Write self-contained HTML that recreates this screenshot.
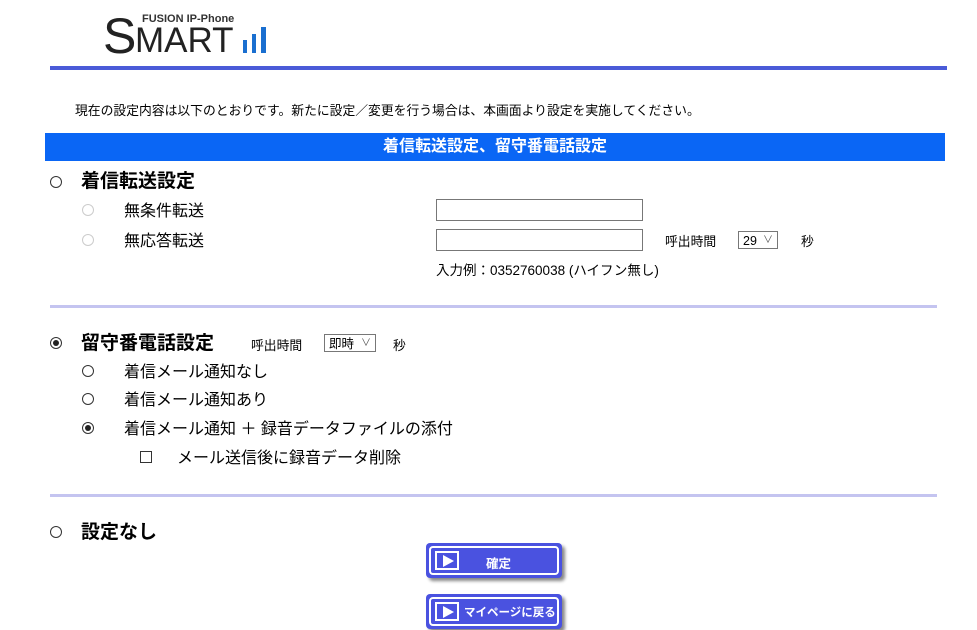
<!DOCTYPE html>
<html><head><meta charset="utf-8">
<style>
body{margin:0;width:977px;height:630px;overflow:hidden;background:#fff;font-family:"Liberation Sans","Noto Sans CJK JP",sans-serif;color:#000;position:relative}
.a{position:absolute;white-space:nowrap}
.r{position:absolute;width:10px;height:10px;border:1px solid #333;border-radius:50%;background:#fff}
.r.dis{border-color:#ccc}
.r.on::after{content:"";position:absolute;left:2px;top:2px;width:6px;height:6px;border-radius:50%;background:#222}
.in{position:absolute;border:1px solid #777;background:#fff;height:20px}
.sel{position:absolute;border:1px solid #777;height:18px;font-size:12.5px;line-height:18px;padding-left:4px;box-sizing:border-box}
.sel span{position:absolute;right:4px;top:0;font-size:10px;color:#555}
.btn{position:absolute;left:426px;width:136px;height:35px;background:#4a52e0;border-radius:4px;box-shadow:3px 3px 3px #888}
.btn .b{position:absolute;left:3px;top:3px;right:3px;bottom:3px;border:2px solid #fff;border-radius:4px}
.btn .p{position:absolute;left:9px;top:8px;width:24px;height:19px;border:2px solid #fff;box-sizing:border-box;background:#4a52e0}
.btn .p::after{content:"";position:absolute;left:6px;top:2px;border-left:11px solid #fff;border-top:6px solid transparent;border-bottom:6px solid transparent}
.btn .t{position:absolute;color:#fff;font-weight:bold;font-size:12.5px;top:10px}
</style></head><body>
<div class="a" style="left:103px;top:12px;font-size:50px;line-height:48px;color:#222">S</div>
<div class="a" style="left:135px;top:25px;font-size:35px;line-height:32px;color:#222">MART</div>
<div class="a" style="left:142px;top:13px;font-size:11px;font-weight:bold;color:#333">FUSION IP-Phone</div>
<div class="a" style="left:243px;top:40px;width:4px;height:13px;background:#1a6fd0"></div>
<div class="a" style="left:252px;top:34px;width:4px;height:19px;background:#1a6fd0"></div>
<div class="a" style="left:261px;top:27px;width:5px;height:26px;background:#1a6fd0"></div>
<div class="a" style="left:50px;top:66px;width:897px;height:4px;background:#4a5bd8"></div>
<div class="a" style="left:75px;top:100px;font-size:12.8px">現在の設定内容は以下のとおりです。新たに設定／変更を行う場合は、本画面より設定を実施してください。</div>
<div class="a" style="left:45px;top:133px;width:900px;height:28px;background:#0a66f5;color:#fff;font-weight:bold;font-size:16px;line-height:27px;text-align:center">着信転送設定、留守番電話設定</div>
<div class="r" style="left:50px;top:176px"></div>
<div class="a" style="left:81px;top:166px;font-size:19px;font-weight:bold">着信転送設定</div>
<div class="r dis" style="left:82px;top:204px"></div>
<div class="a" style="left:124px;top:197px;font-size:16px">無条件転送</div>
<div class="in" style="left:436px;top:199px;width:205px"></div>
<div class="r dis" style="left:82px;top:234px"></div>
<div class="a" style="left:124px;top:227px;font-size:16px">無応答転送</div>
<div class="in" style="left:436px;top:229px;width:205px"></div>
<div class="a" style="left:665px;top:231px;font-size:12.8px">呼出時間</div>
<div class="sel" style="left:738px;top:231px;width:40px">29<span>∨</span></div>
<div class="a" style="left:801px;top:231px;font-size:12.8px">秒</div>
<div class="a" style="left:436px;top:259px;font-size:13.5px">入力例：0352760038 (ハイフン無し)</div>
<div class="a" style="left:50px;top:305px;width:887px;height:3px;background:#c4c4f0"></div>
<div class="r on" style="left:50px;top:337px"></div>
<div class="a" style="left:81px;top:328px;font-size:19px;font-weight:bold">留守番電話設定</div>
<div class="a" style="left:251px;top:335px;font-size:12.8px">呼出時間</div>
<div class="sel" style="left:324px;top:334px;width:52px">即時<span>∨</span></div>
<div class="a" style="left:393px;top:335px;font-size:12.8px">秒</div>
<div class="r" style="left:82px;top:365px"></div>
<div class="a" style="left:124px;top:358px;font-size:16px">着信メール通知なし</div>
<div class="r" style="left:82px;top:393px"></div>
<div class="a" style="left:124px;top:386px;font-size:16px">着信メール通知あり</div>
<div class="r on" style="left:82px;top:422px"></div>
<div class="a" style="left:124px;top:415px;font-size:16px">着信メール通知 ＋ 録音データファイルの添付</div>
<div class="a" style="left:140px;top:451px;width:10px;height:10px;border:1px solid #333"></div>
<div class="a" style="left:177px;top:444px;font-size:16px">メール送信後に録音データ削除</div>
<div class="a" style="left:50px;top:494px;width:887px;height:3px;background:#c4c4f0"></div>
<div class="r" style="left:50px;top:526px"></div>
<div class="a" style="left:81px;top:517px;font-size:19px;font-weight:bold">設定なし</div>
<div class="btn" style="top:543px"><div class="b"></div><div class="p"></div><div class="t" style="left:60px">確定</div></div>
<div class="btn" style="top:594px"><div class="b"></div><div class="p"></div><div class="t" style="left:38px;font-size:11.5px">マイページに戻る</div></div>
</body></html>
